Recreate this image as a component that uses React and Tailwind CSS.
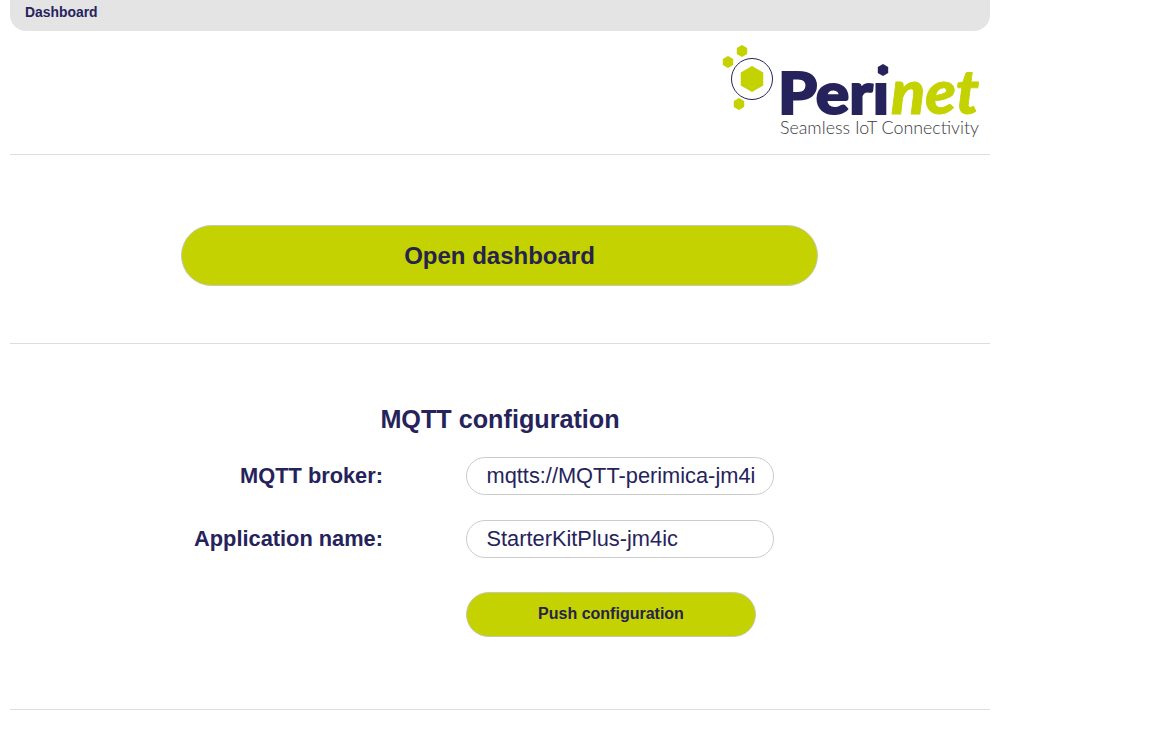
const Hexagon = ({ cx, cy, r, fill }) => {
  const points = [0, 60, 120, 180, 240, 300]
    .map((deg) => {
      const a = ((deg - 90) * Math.PI) / 180;
      return `${cx + r * Math.cos(a)},${cy + r * Math.sin(a)}`;
    })
    .join(" ");
  return <polygon points={points} fill={fill} />;
};

const Logo = () => (
  <svg width="262" height="104" viewBox="0 0 262 104" className="block">
    <circle cx="32" cy="34" r="20.5" fill="none" stroke="#26235c" strokeWidth="1" />
    <Hexagon cx={32} cy={34} r={13} fill="#c3d200" />
    <Hexagon cx={22} cy={6} r={6} fill="#c3d200" />
    <Hexagon cx={8} cy={17} r={6} fill="#c3d200" />
    <Hexagon cx={19} cy={59} r={6} fill="#c3d200" />
    <Hexagon cx={163} cy={25} r={6} fill="#26235c" />
    <text x="58" y="69" fontFamily="Lato, sans-serif" fontWeight="900" fontSize="58" fill="#26235c" stroke="#26235c" strokeWidth="2" textLength="111" lengthAdjust="spacingAndGlyphs">
      Perı
    </text>
    <text x="171" y="69" fontFamily="Lato, sans-serif" fontWeight="900" fontStyle="italic" fontSize="60" fill="#c3d200" stroke="#c3d200" strokeWidth="0.8" textLength="88" lengthAdjust="spacingAndGlyphs">
      net
    </text>
    <text x="60" y="89" fontFamily="Lato, sans-serif" fontWeight="300" fontSize="18.5" fill="#3a3a3a" textLength="199" lengthAdjust="spacingAndGlyphs">
      Seamless IoT Connectivity
    </text>
  </svg>
);

const Field = ({ label, value }) => (
  <div className="flex items-center h-[38px]">
    <label className="w-[373px] text-right text-[21.8px] font-bold text-[#26235c]">{label}</label>
    <input
      readOnly
      value={value}
      className="ml-[83px] w-[308px] h-[38px] rounded-[19px] border border-[#cccccc] bg-white pl-[19.5px] pr-[18px] text-[21.8px] text-[#26235c] outline-none font-['Liberation_Sans',Arial,sans-serif]"
    />
  </div>
);

export default function App() {
  return (
    <div className="min-h-[749px] bg-white font-['Liberation_Sans',Arial,sans-serif]">
      <div className="ml-[10px] w-[980px]">
        <div className="h-[31px] rounded-b-[16px] bg-[#e4e4e4] pl-[15px] pt-[4px] text-[13.9px] font-bold leading-[16px] text-[#26235c]">
          Dashboard
        </div>

        <div className="flex h-[124px] justify-end border-b border-[#dddddd] pr-[8px] pt-[14px]">
          <Logo />
        </div>

        <div className="flex h-[189px] justify-center border-b border-[#dddddd] pt-[70px]">
          <button className="ml-[-1px] h-[61px] w-[637px] rounded-[31px] border border-[#c8c8b0] bg-[#c3d200] text-[24px] font-bold text-[#26234c]">
            Open dashboard
          </button>
        </div>

        <div className="h-[366px] border-b border-[#dddddd]">
          <h2 className="pt-[59px] text-center text-[25.2px] font-bold leading-[32px] text-[#26235c]">MQTT configuration</h2>
          <div className="mt-[22px] flex flex-col gap-[25px]">
            <Field label="MQTT broker:" value="mqtts://MQTT-perimica-jm4ic" />
            <Field label="Application name:" value="StarterKitPlus-jm4ic" />
          </div>
          <button className="ml-[456px] mt-[34px] h-[45px] w-[290px] rounded-[23px] border border-[#c8c8b0] bg-[#c3d200] pb-[1px] text-[16px] font-bold text-[#26234c]">
            Push configuration
          </button>
        </div>
      </div>
    </div>
  );
}
